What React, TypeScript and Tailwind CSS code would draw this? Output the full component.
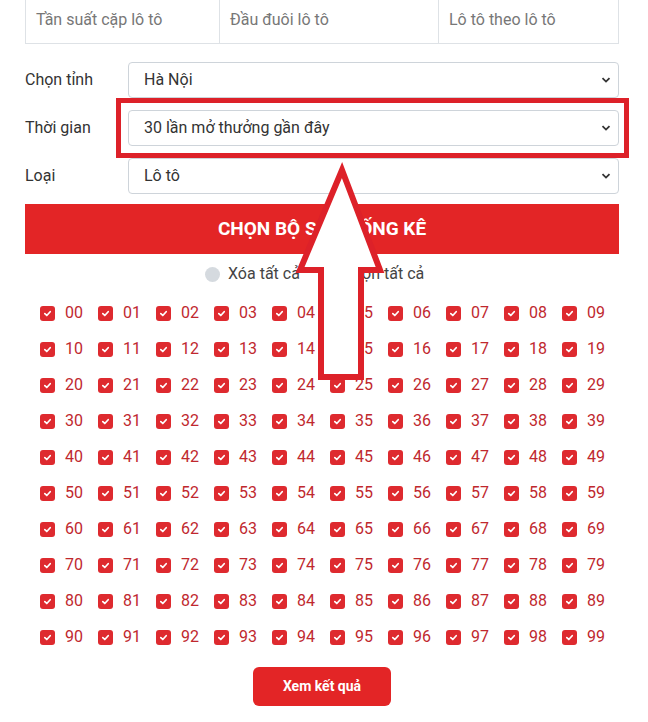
import React from 'react';

const tabs = [
  { label: 'Tần suất cặp lô tô', w: 'w-[193px]' },
  { label: 'Đầu đuôi lô tô', w: 'w-[219px]' },
  { label: 'Lô tô theo lô tô', w: 'flex-1' },
];

const fields = [
  { label: 'Chọn tỉnh', value: 'Hà Nội' },
  { label: 'Thời gian', value: '30 lần mở thưởng gần đây' },
  { label: 'Loại', value: 'Lô tô' },
];

function Chevron() {
  return (
    <svg width="10" height="10" viewBox="0 0 10 10" className="text-[#333]">
      <path d="M1.5 3.2 L5 6.6 L8.5 3.2" fill="none" stroke="currentColor" strokeWidth="1.8" />
    </svg>
  );
}

function CheckBox() {
  return (
    <span className="flex h-[15px] w-[15px] items-center justify-center rounded-[3px] bg-[#de2a2f]">
      <svg width="9" height="9" viewBox="0 0 10 10">
        <path d="M2 5.2 L4.2 7.2 L8 3" fill="none" stroke="#fff" strokeWidth="1.9" strokeLinecap="round" strokeLinejoin="round" />
      </svg>
    </span>
  );
}

export default function App() {
  const numbers = Array.from({ length: 100 }, (_, i) => String(i).padStart(2, '0'));

  return (
    <div className="relative h-[722px] w-[648px] overflow-hidden bg-white font-['Roboto',sans-serif]">
      <div className="ml-[25px] w-[594px]">
        {/* tabs (top cut off by scroll) */}
        <div className="flex h-[44px] border-x border-b border-[#dee2e6]">
          {tabs.map((t, i) => (
            <div
              key={t.label}
              className={`${t.w} flex items-start pt-[8px] pl-[10px] text-[16px] text-[#777] ${i > 0 ? 'border-l border-[#dee2e6]' : ''}`}
            >
              {t.label}
            </div>
          ))}
        </div>

        {/* filters */}
        <div className="mt-[18px] flex flex-col gap-[12px]">
          {fields.map((f) => (
            <div key={f.label} className="flex items-center">
              <div className="w-[103px] text-[16px] text-[#333]">{f.label}</div>
              <div className="flex h-[36px] flex-1 items-center justify-between rounded-[4px] border border-[#ced4da] pl-[15px] pr-[7px] text-[16px] text-[#333]">
                <span>{f.value}</span>
                <Chevron />
              </div>
            </div>
          ))}
        </div>

        <div className="mt-[10px] flex h-[50px] items-center justify-center bg-[#e32526] text-[19px] font-bold text-white">
          CHỌN BỘ SỐ THỐNG KÊ
        </div>

        <div className="mt-[8px] flex items-center gap-[20px] pl-[180px] text-[16px] text-[#444]">
          <label className="flex items-center gap-[8px]">
            <span className="h-[15px] w-[15px] rounded-full bg-[#d5dadf]" />
            Xóa tất cả
          </label>
          <label className="flex items-center gap-[8px]">
            <span className="h-[15px] w-[15px] rounded-full bg-[#d5dadf]" />
            Chọn tất cả
          </label>
        </div>

        <div className="mt-[18px] grid grid-cols-[repeat(10,58px)] gap-y-[18px] pl-[15px]">
          {numbers.map((n) => (
            <div key={n} className="flex h-[18px] items-center gap-[10px]">
              <CheckBox />
              <span className="text-[16px] text-[#c0282e]">{n}</span>
            </div>
          ))}
        </div>

        <div className="mt-[21px] flex">
          <button className="ml-[228px] h-[39px] w-[138px] rounded-[6px] bg-[#e32526] text-[14px] font-bold text-white">
            Xem kết quả
          </button>
        </div>
      </div>

      {/* annotation highlight */}
      <div className="absolute left-[116px] top-[98px] h-[60px] w-[513px] border-[5px] border-[#dd2129]" />
      <svg className="absolute left-0 top-0" width="648" height="722">
        <polygon
          points="342,170 380,270 361,270 361,377 321,377 321,270 300,270"
          fill="#fff"
          stroke="#dd2129"
          strokeWidth="6"
          strokeLinejoin="miter"
        />
      </svg>
    </div>
  );
}
